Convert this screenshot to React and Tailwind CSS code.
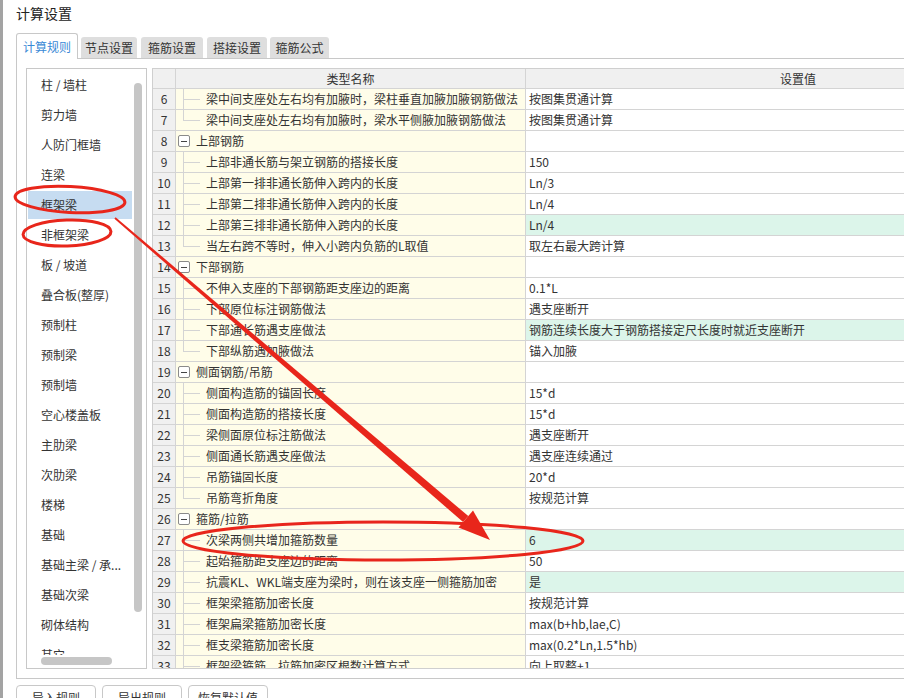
import React from "react";

const listItems = [
  "柱 / 墙柱", "剪力墙", "人防门框墙", "连梁", "框架梁", "非框架梁", "板 / 坡道", "叠合板(整厚)",
  "预制柱", "预制梁", "预制墙", "空心楼盖板", "主肋梁", "次肋梁", "楼梯", "基础", "基础主梁 / 承...",
  "基础次梁", "砌体结构", "其它",
];

const rows = [
  { n: 6, k: "c", t: "梁中间支座处左右均有加腋时，梁柱垂直加腋加腋钢筋做法", v: "按图集贯通计算" },
  { n: 7, k: "l", t: "梁中间支座处左右均有加腋时，梁水平侧腋加腋钢筋做法", v: "按图集贯通计算" },
  { n: 8, k: "g", t: "上部钢筋", v: "" },
  { n: 9, k: "c", t: "上部非通长筋与架立钢筋的搭接长度", v: "150" },
  { n: 10, k: "c", t: "上部第一排非通长筋伸入跨内的长度", v: "Ln/3" },
  { n: 11, k: "c", t: "上部第二排非通长筋伸入跨内的长度", v: "Ln/4" },
  { n: 12, k: "c", t: "上部第三排非通长筋伸入跨内的长度", v: "Ln/4", g: true },
  { n: 13, k: "l", t: "当左右跨不等时，伸入小跨内负筋的L取值", v: "取左右最大跨计算" },
  { n: 14, k: "g", t: "下部钢筋", v: "" },
  { n: 15, k: "c", t: "不伸入支座的下部钢筋距支座边的距离", v: "0.1*L" },
  { n: 16, k: "c", t: "下部原位标注钢筋做法", v: "遇支座断开" },
  { n: 17, k: "c", t: "下部通长筋遇支座做法", v: "钢筋连续长度大于钢筋搭接定尺长度时就近支座断开", g: true },
  { n: 18, k: "l", t: "下部纵筋遇加腋做法", v: "锚入加腋" },
  { n: 19, k: "g", t: "侧面钢筋/吊筋", v: "" },
  { n: 20, k: "c", t: "侧面构造筋的锚固长度", v: "15*d" },
  { n: 21, k: "c", t: "侧面构造筋的搭接长度", v: "15*d" },
  { n: 22, k: "c", t: "梁侧面原位标注筋做法", v: "遇支座断开" },
  { n: 23, k: "c", t: "侧面通长筋遇支座做法", v: "遇支座连续通过" },
  { n: 24, k: "c", t: "吊筋锚固长度", v: "20*d" },
  { n: 25, k: "l", t: "吊筋弯折角度", v: "按规范计算" },
  { n: 26, k: "g", t: "箍筋/拉筋", v: "" },
  { n: 27, k: "c", t: "次梁两侧共增加箍筋数量", v: "6", g: true },
  { n: 28, k: "c", t: "起始箍筋距支座边的距离", v: "50" },
  { n: 29, k: "c", t: "抗震KL、WKL端支座为梁时，则在该支座一侧箍筋加密", v: "是", g: true },
  { n: 30, k: "c", t: "框架梁箍筋加密长度", v: "按规范计算" },
  { n: 31, k: "c", t: "框架扁梁箍筋加密长度", v: "max(b+hb,lae,C)" },
  { n: 32, k: "c", t: "框支梁箍筋加密长度", v: "max(0.2*Ln,1.5*hb)" },
  { n: 33, k: "c", t: "框架梁箍筋、拉筋加密区根数计算方式", v: "向上取整+1" },
];

function Tree({ k }) {
  if (k === "g") {
    return (
      <div className="w-[20px] h-full flex items-center shrink-0">
        <div className="ml-[2px] w-[12px] h-[12px] border border-[#8a8a8a] rounded-[2px] bg-white flex items-center justify-center">
          <div className="w-[6px] h-px bg-[#444]" />
        </div>
      </div>
    );
  }
  return (
    <div className="w-[30px] h-full relative shrink-0">
      <div className={`absolute left-[7px] top-0 w-px bg-[#d4d4d4] ${k === "l" ? "h-[10px]" : "h-full"}`} />
      <div className="absolute left-[7px] top-[10px] w-[17px] h-px bg-[#d4d4d4]" />
    </div>
  );
}

export default function App() {
  return (
    <div className="relative w-[904px] h-[698px] overflow-hidden bg-white flex font-['Noto_Sans_CJK_SC','Microsoft_YaHei',sans-serif] text-[#333]">
      <div className="w-[3px] h-full bg-[#a3a3a3] shrink-0" />
      <div className="flex-1 flex flex-col pl-[13px] overflow-hidden">
        <div className="h-[33px] shrink-0 pt-[5px] text-[14px] leading-[16px] text-[#222]">计算设置</div>
        <div className="h-[25px] shrink-0 flex items-end text-[12px]">
          <div className="relative z-10 -mb-px h-[26px] w-[62px] border border-b-0 border-[#c8c8c8] rounded-t-[3px] bg-white text-[#3a8ad6] flex items-center justify-center">计算规则</div>
          <div className="ml-[3px] h-[21px] w-[56px] rounded-t-[3px] bg-[#dedede] flex items-center justify-center">节点设置</div>
          <div className="ml-[4px] h-[21px] w-[62px] rounded-t-[3px] bg-[#dedede] flex items-center justify-center">箍筋设置</div>
          <div className="ml-[4px] h-[21px] w-[60px] rounded-t-[3px] bg-[#dedede] flex items-center justify-center">搭接设置</div>
          <div className="ml-[3px] h-[21px] w-[59px] rounded-t-[3px] bg-[#dedede] flex items-center justify-center">箍筋公式</div>
        </div>
        <div className="w-[1100px] shrink-0 border border-r-0 border-[#c8c8c8] pl-[9px] pt-[9px] pb-[9px] flex text-[12px]">
          <div className="relative w-[121px] h-[601px] border border-[#c8c8c8] bg-white shrink-0">
            <div className="h-[586px] overflow-hidden pt-[2px]">
              {listItems.map((it) => (
                <div
                  key={it}
                  className={`ml-px w-[104px] h-[28px] mb-[2px] pl-[13px] flex items-center whitespace-nowrap ${it === "框架梁" ? "bg-[#c6dcf1]" : ""}`}
                >
                  {it}
                </div>
              ))}
            </div>
            <div className="absolute left-[107px] top-[14px] w-[8px] h-[529px] rounded-full bg-[#c6c6c6]" />
            <div className="absolute left-[14px] top-[588px] w-[71px] h-[8px] rounded-full bg-[#c6c6c6]" />
          </div>
          <div className="ml-[5px] w-[960px] h-[601px] border border-r-0 border-[#cfcfcf] overflow-hidden shrink-0">
            <div className="flex h-[20px] border-b border-[#d4d4d4] bg-[#f0f0f0]">
              <div className="w-[23px] border-r border-[#d4d4d4] shrink-0" />
              <div className="w-[350px] border-r border-[#d4d4d4] shrink-0 flex items-center justify-center leading-[19px]">类型名称</div>
              <div className="w-[544px] shrink-0 flex items-center justify-center leading-[19px]">设置值</div>
            </div>
            {rows.map((r) => (
              <div key={r.n} className="flex h-[21px] border-b border-[#d4d4d4] leading-[20px]">
                <div className="w-[23px] border-r border-[#d4d4d4] bg-[#f0f0f0] shrink-0 flex items-center justify-center">{r.n}</div>
                <div className="w-[350px] border-r border-[#d4d4d4] bg-[#fffde9] shrink-0 flex items-center whitespace-nowrap overflow-hidden">
                  <Tree k={r.k} />
                  <span>{r.t}</span>
                </div>
                <div className={`w-[544px] shrink-0 pl-[3px] flex items-center whitespace-nowrap ${r.g ? "bg-[#dcf5ea]" : "bg-white"}`}>{r.v}</div>
              </div>
            ))}
          </div>
        </div>
        <div className="mt-[6px] flex gap-[6px] text-[12px] shrink-0">
          <div className="w-[80px] h-[26px] border border-[#c8c8c8] rounded-[4px] bg-white flex items-center justify-center">导入规则</div>
          <div className="w-[80px] h-[26px] border border-[#c8c8c8] rounded-[4px] bg-white flex items-center justify-center">导出规则</div>
          <div className="w-[80px] h-[26px] border border-[#c8c8c8] rounded-[4px] bg-white flex items-center justify-center">恢复默认值</div>
        </div>
      </div>
      <svg className="absolute inset-0 pointer-events-none" width="904" height="698" viewBox="0 0 904 698">
        <ellipse cx="70" cy="199.5" rx="55" ry="13" transform="rotate(3 70 199.5)" fill="none" stroke="#e8261b" strokeWidth="3" />
        <ellipse cx="67" cy="233" rx="44" ry="13" transform="rotate(-2 67 233)" fill="none" stroke="#e8261b" strokeWidth="3" />
        <ellipse cx="383" cy="541" rx="200" ry="19" fill="none" stroke="#e8261b" strokeWidth="3" />
        <polygon points="114.4,218.8 115.6,217.2 468.3,516.1 463.1,522.1" fill="#e8261b" />
        <polygon points="490,540 458.5,527.5 473,510.5" fill="#e8261b" />
      </svg>
    </div>
  );
}
